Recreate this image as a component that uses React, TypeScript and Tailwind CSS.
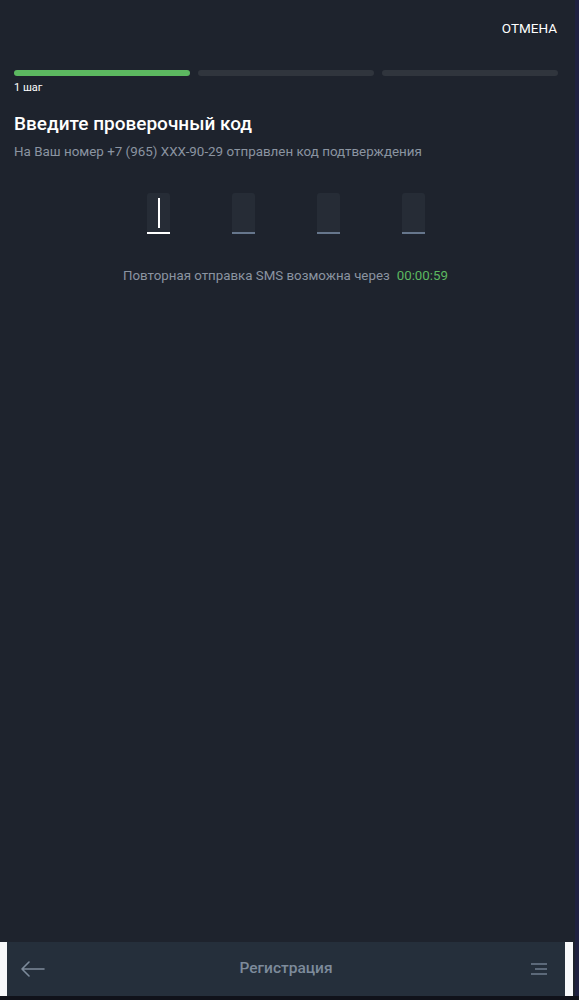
import { useState } from 'react';

const Cell = ({ active }: { active: boolean }) => (
  <div className="relative w-[23px] h-[41px] rounded-t-[3px] bg-[#262c36]">
    {active && <div className="absolute left-[11px] top-[5px] w-[2px] h-[30px] bg-white" />}
    <div className={`absolute left-0 right-0 bottom-0 h-[2px] ${active ? 'bg-white' : 'bg-[#66768c]'}`} />
  </div>
);

export default function App() {
  const [code] = useState(['', '', '', '']);

  return (
    <div className="h-[1000px] w-full flex flex-col bg-[#12141f] font-['Roboto',sans-serif]">
      <div className="flex flex-1">
        <div className="w-[575px] flex flex-col bg-[#1e232d]">
          {/* header */}
          <div className="flex justify-end pt-[19px] pr-[18px] h-[40px]">
            <span className="text-white text-[13.5px] leading-[18px]">ОТМЕНА</span>
          </div>

          {/* steps */}
          <div className="px-[14px] pt-[30px]">
            <div className="flex gap-[8px] pr-[3px]">
              <div className="h-[6px] flex-1 rounded-full bg-[#5cb860]" />
              <div className="h-[6px] flex-1 rounded-full bg-[#30353d]" />
              <div className="h-[6px] flex-1 rounded-full bg-[#30353d]" />
            </div>
            <div className="text-white text-[11px] leading-[13px] mt-[5px]">1 шаг</div>
          </div>

          <div className="px-[14px] mt-[19px]">
            <h1 className="text-white text-[19px] leading-[22px] font-medium">Введите проверочный код</h1>
            <p className="text-[#8b94a1] text-[13.4px] leading-[16px] mt-[9px]">
              На Ваш номер +7 (965) XXX-90-29 отправлен код подтверждения
            </p>
          </div>

          {/* code inputs */}
          <div className="flex justify-center gap-[62px] mt-[33px] pr-[4px]">
            {code.map((_, i) => (
              <Cell key={i} active={i === 0} />
            ))}
          </div>

          <div className="flex justify-center items-center gap-[7px] mt-[34px] text-[13.3px] leading-[16px] pr-[4px]">
            <span className="text-[#8b94a1]">Повторная отправка SMS возможна через</span>
            <span className="text-[#5cb860]">00:00:59</span>
          </div>

          <div className="flex-1" />

          {/* bottom bar */}
          <div className="flex h-[54px]">
            <div className="w-[7px] bg-[#f7f8fa]" />
            <div className="flex-1 bg-[#252f3b] grid grid-cols-[1fr_auto_1fr] items-center px-[13px]">
              <svg width="26" height="16" viewBox="0 0 26 16" fill="none" stroke="#7d8b9b" strokeWidth="1.6" strokeLinecap="round" strokeLinejoin="round">
                <path d="M24 8H2M9 1L2 8l7 7" />
              </svg>
              <span className="text-[#7d8b9b] text-[15.5px] font-medium">Регистрация</span>
              <div className="flex justify-end pr-[4px]">
                <svg width="18" height="14" viewBox="0 0 18 14" fill="none" stroke="#6f7d8e" strokeWidth="1.6">
                  <path d="M1 2h16M5 7h12M1 12h16" />
                </svg>
              </div>
            </div>
            <div className="w-[8px] bg-[#f7f8fa]" />
            <div className="w-[2px] bg-[#1e232d]" />
          </div>
        </div>
        <div className="flex-1 bg-[#1f2140]" />
      </div>
      <div className="h-[4px] bg-[#10121a]" />
    </div>
  );
}
